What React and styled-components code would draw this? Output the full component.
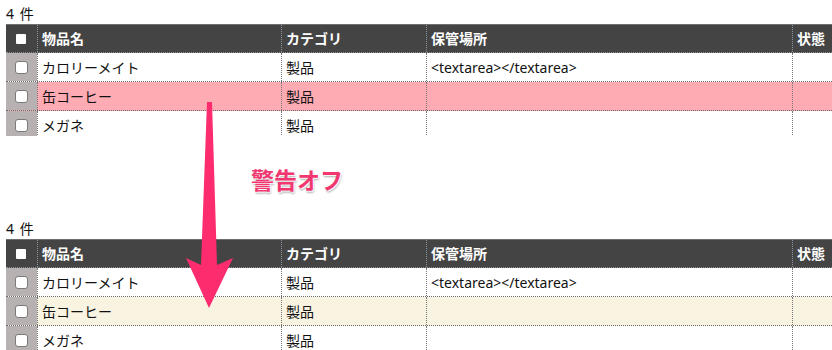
import React from "react";
import styled, { createGlobalStyle } from "styled-components";

const GlobalStyle = createGlobalStyle`
  html, body {
    margin: 0;
    padding: 0;
    background: #fff;
  }
  body {
    font-family: "Noto Sans", "Noto Sans CJK JP", sans-serif;
    color: #111;
  }
`;

const Page = styled.div`
  position: relative;
  width: 832px;
  height: 350px;
  overflow: hidden;
  background: #fff;
`;

const Panel = styled.div`
  height: ${(p) => p.$height}px;
  overflow: hidden;
  padding-left: 6px;
`;

const Count = styled.div`
  height: 24px;
  box-sizing: border-box;
  padding-top: 5px;
  font-size: 14px;
  line-height: 17px;
  letter-spacing: 1px;
`;

const Table = styled.div`
  width: 900px;
  font-size: 14px;
`;

const Row = styled.div`
  display: grid;
  grid-template-columns: 31px 244px 145px 366px 114px;
  height: 29px;
  box-sizing: border-box;
  background: ${(p) => p.$bg || "#fff"};
  border-bottom: 1px dotted #6a6a6a;
`;

const HeadRow = styled(Row)`
  background: #444;
  border-top: 1px solid #6e6e6e;
  border-bottom: 1px dotted #8a8f95;
  color: #fff;
  font-weight: bold;
`;

const Cell = styled.div`
  display: flex;
  align-items: center;
  padding-left: 4px;
  border-left: 1px dotted ${(p) => (p.$head ? "#8a97a3" : "#777")};
  white-space: nowrap;
  overflow: hidden;
  line-height: 17px;
`;

const CheckCell = styled.div`
  display: flex;
  align-items: center;
  justify-content: center;
  background: ${(p) => (p.$head ? "transparent" : "#b7b1b1")};
`;

const Box = styled.span`
  display: block;
  width: ${(p) => (p.$head ? 10 : 11)}px;
  height: ${(p) => (p.$head ? 10 : 11)}px;
  background: #fff;
  border: ${(p) => (p.$head ? "none" : "1px solid #7a7a7a")};
  border-radius: ${(p) => (p.$head ? 1 : 3)}px;
  margin-left: -1px;
`;

const Between = styled.div`
  height: 79px;
  padding-left: 251px;
  box-sizing: border-box;
  padding-top: 28px;
`;

const Label = styled.div`
  font-family: "Noto Sans CJK JP", sans-serif;
  font-weight: bold;
  font-size: 23px;
  line-height: 30px;
  color: #f23670;
  text-shadow: 1px 1px 1px #fff, 1px 2px 2px rgba(0, 0, 0, 0.35);
`;

const Arrow = styled.svg`
  position: absolute;
  left: 0;
  top: 0;
  pointer-events: none;
`;

const items = [
  { name: "カロリーメイト", cat: "製品", place: "<textarea></textarea>" },
  { name: "缶コーヒー", cat: "製品", place: "", warn: true },
  { name: "メガネ", cat: "製品", place: "" },
];

const ItemTable = ({ warnColor }) => (
  <Table>
    <HeadRow>
      <CheckCell $head>
        <Box $head />
      </CheckCell>
      <Cell $head>物品名</Cell>
      <Cell $head>カテゴリ</Cell>
      <Cell $head>保管場所</Cell>
      <Cell $head>状態</Cell>
    </HeadRow>
    {items.map((it) => (
      <Row key={it.name} $bg={it.warn ? warnColor : "#fff"}>
        <CheckCell>
          <Box />
        </CheckCell>
        <Cell>{it.name}</Cell>
        <Cell>{it.cat}</Cell>
        <Cell>{it.place}</Cell>
        <Cell />
      </Row>
    ))}
  </Table>
);

export default function App() {
  return (
    <Page>
      <GlobalStyle />
      <Panel $height={136}>
        <Count>4 件</Count>
        <ItemTable warnColor="#ffabb3" />
      </Panel>
      <Between>
        <Label>警告オフ</Label>
      </Between>
      <Panel $height={135}>
        <Count>4 件</Count>
        <ItemTable warnColor="#f9f3e1" />
      </Panel>
      <Arrow width="832" height="350" viewBox="0 0 832 350">
        <polygon
          points="207,102 212,102 217,265 233,258 209,308 186,258 201,265"
          fill="#fc2c6e"
        />
      </Arrow>
    </Page>
  );
}
